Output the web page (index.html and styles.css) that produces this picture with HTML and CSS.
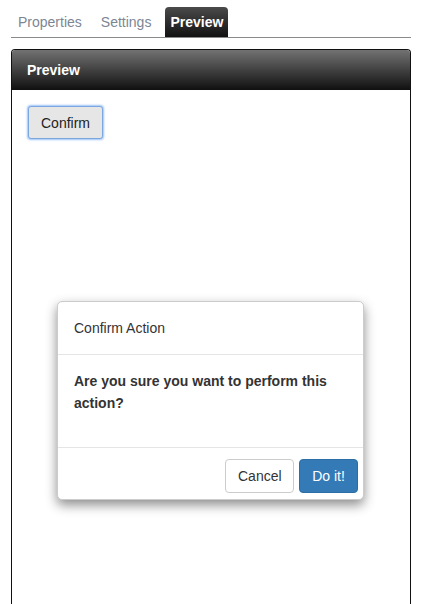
FILE: index.html
```html
<!DOCTYPE html>
<html>
<head>
<meta charset="utf-8">
<link rel="stylesheet" href="styles.css">
</head>
<body>
<div class="page">
  <ul class="tabs">
    <li class="tab">Properties</li>
    <li class="tab">Settings</li>
    <li class="tab active">Preview</li>
  </ul>
  <div class="panel">
    <div class="panel-head">Preview</div>
    <div class="panel-body">
      <button class="btn-confirm">Confirm</button>
      <div class="modal">
        <div class="modal-head">Confirm Action</div>
        <div class="modal-body">Are you sure you want to perform this action?</div>
        <div class="modal-foot">
          <button class="btn btn-default">Cancel</button>
          <button class="btn btn-primary">Do it!</button>
        </div>
      </div>
    </div>
  </div>
</div>
</body>
</html>
```
FILE: styles.css
```css
html, body {
  margin: 0;
  padding: 0;
  background: #fff;
  font-family: "Liberation Sans", Arial, sans-serif;
  font-size: 14px;
  color: #333;
}
.page {
  padding: 7px 22px 0 11px;
  height: 597px;
  display: flex;
  flex-direction: column;
}
.tabs {
  list-style: none;
  margin: 0;
  padding: 0;
  display: flex;
  border-bottom: 1px solid #8a8a8a;
  height: 30px;
}
.tab {
  padding: 0 7px 0 7px;
  margin-right: 5px;
  line-height: 31px;
  color: #7c8693;
  font-size: 14px;
}
.tab.active {
  margin-left: 2px;
  padding: 0 5px;
  background: linear-gradient(#4a4a4a, #121212);
  color: #fff;
  font-weight: bold;
  border-radius: 4px 4px 0 0;
}
.panel {
  margin-top: 11px;
  flex: 1;
  border: 1px solid #111;
  border-bottom: none;
  border-radius: 4px 4px 0 0;
  display: flex;
  flex-direction: column;
}
.panel-head {
  height: 40px;
  line-height: 41px;
  padding-left: 15px;
  background: linear-gradient(#727272, #101010);
  color: #fff;
  font-weight: bold;
  font-size: 14px;
  border-radius: 3px 3px 0 0;
}
.panel-body {
  flex: 1;
  padding: 16px 15px 0 16px;
  display: flex;
  flex-direction: column;
}
.btn-confirm {
  align-self: flex-start;
  width: 75px;
  height: 33px;
  font-family: inherit;
  font-size: 14px;
  color: #222;
  background: #e6e6e6;
  border: 1px solid #7aa7e0;
  border-radius: 3px;
  box-shadow: 0 0 2px 1px #9cc3f5;
  padding: 0;
}
.modal {
  margin: 162px 0 0 29px;
  width: 305px;
  border: 1px solid #ccc;
  border-radius: 5px;
  background: #fff;
  box-shadow: 0 5px 12px rgba(0,0,0,.45);
}
.modal-head {
  height: 52px;
  line-height: 52px;
  padding-left: 16px;
  font-size: 14px;
  color: #333;
  border-bottom: 1px solid #e5e5e5;
}
.modal-body {
  padding: 15px 16px 0 16px;
  height: 77px;
  font-weight: bold;
  line-height: 22px;
  color: #333;
  border-bottom: 1px solid #e5e5e5;
}
.modal-foot {
  display: flex;
  justify-content: flex-end;
  gap: 5px;
  padding: 11px 5px 6px 0;
}
.btn {
  height: 34px;
  font-family: inherit;
  font-size: 14px;
  border-radius: 4px;
  padding: 0 12px;
}
.btn-default {
  width: 69px;
  background: #fff;
  border: 1px solid #ccc;
  color: #333;
}
.btn-primary {
  width: 59px;
  background: #337ab7;
  border: 1px solid #2e6da4;
  color: #fff;
}
```
